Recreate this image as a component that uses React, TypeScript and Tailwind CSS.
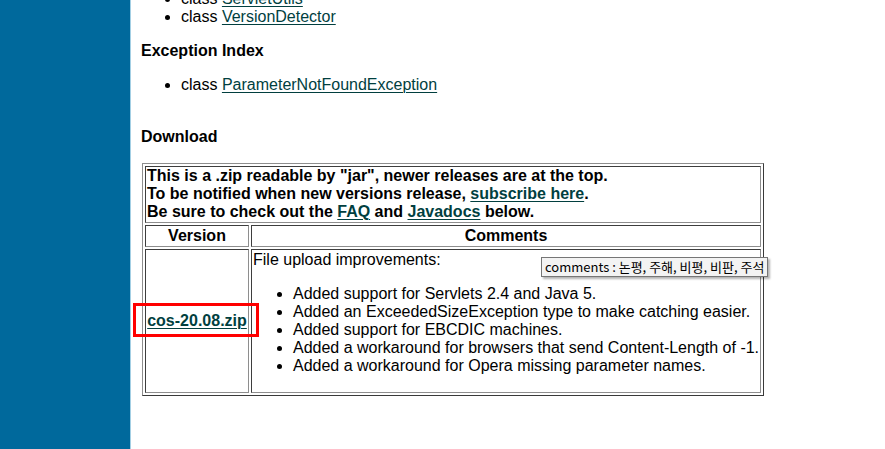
import React from 'react';

// --- small pieces ---
const A: React.FC<{ children: React.ReactNode }> = ({ children }) => (
  <a href="#" className="text-[#013f3f] underline underline-offset-[2px] decoration-1">
    {children}
  </a>
);

const Cell: React.FC<{ className?: string; children?: React.ReactNode }> = ({ className = '', children }) => (
  <div
    className={`border border-t-[#3e3e3e] border-l-[#3e3e3e] border-b-[#8e8e8e] border-r-[#8e8e8e] p-[1px] ${className}`}
  >
    {children}
  </div>
);

const notes = [
  'Added support for Servlets 2.4 and Java 5.',
  'Added an ExceededSizeException type to make catching easier.',
  'Added support for EBCDIC machines.',
  'Added a workaround for browsers that send Content-Length of -1.',
  'Added a workaround for Opera missing parameter names.',
];

const App: React.FC = () => {
  return (
    <div className="relative w-[885px] h-[449px] overflow-hidden bg-white flex font-['Liberation_Sans',Arial,sans-serif] text-[16px] leading-[18px] text-black">
      {/* left colour band */}
      <div className="w-[130px] h-full bg-[#00699c] shrink-0" />
      <div className="w-px h-full bg-[#a3cfe4] shrink-0" />

      {/* main page */}
      <div className="pl-[10px] -mt-[10px] flex flex-col">
        <ul className="list-disc pl-10">
          <li>
            class <A>ServletUtils</A>
          </li>
          <li>
            class <A>VersionDetector</A>
          </li>
        </ul>

        <h4 className="font-bold mt-[16px]">Exception Index</h4>

        <ul className="list-disc pl-10 mt-[16px]">
          <li>
            class <A>ParameterNotFoundException</A>
          </li>
        </ul>

        <h4 className="font-bold mt-[34px]">Download</h4>

        {/* download table */}
        <div className="mt-[17px] ml-px w-[622px] border border-t-[#8e8e8e] border-l-[#8e8e8e] border-b-[#3a3a3a] border-r-[#3a3a3a] p-[2px] flex flex-col gap-[2px]">
          <Cell className="h-[57px] py-0 font-bold whitespace-nowrap">
            <div>This is a .zip readable by "jar", newer releases are at the top.</div>
            <div>
              To be notified when new versions release, <A>subscribe here</A>.
            </div>
            <div>
              Be sure to check out the <A>FAQ</A> and <A>Javadocs</A> below.
            </div>
          </Cell>

          <div className="grid grid-cols-[104px_1fr] gap-[2px]">
            <Cell className="h-[22px] font-bold text-center">Version</Cell>
            <Cell className="h-[22px] font-bold text-center">Comments</Cell>
          </div>

          <div className="grid grid-cols-[104px_1fr] gap-[2px]">
            <Cell className="h-[144px] flex items-center justify-center font-bold">
              <A>cos-20.08.zip</A>
            </Cell>
            <Cell className="h-[144px] whitespace-nowrap">
              <div>File upload improvements:</div>
              <ul className="list-disc pl-10 mt-[16px]">
                {notes.map(n => (
                  <li key={n}>{n}</li>
                ))}
              </ul>
            </Cell>
          </div>
        </div>
      </div>

      {/* hover tooltip */}
      <div className="absolute left-[541px] top-[257px] h-[20px] px-[3px] flex items-center whitespace-nowrap bg-[#f3f3f3] border border-[#767676] shadow-[2px_2px_2px_rgba(0,0,0,0.3)] text-[13px] leading-[16px] font-['Noto_Sans_CJK_KR','Noto_Sans',sans-serif]">
        comments : 논평, 주해, 비평, 비판, 주석
      </div>

      {/* red highlight */}
      <div className="absolute left-[133px] top-[303px] w-[126px] h-[34px] border-[3px] border-[#ff0000]" />
    </div>
  );
};

export default App;
